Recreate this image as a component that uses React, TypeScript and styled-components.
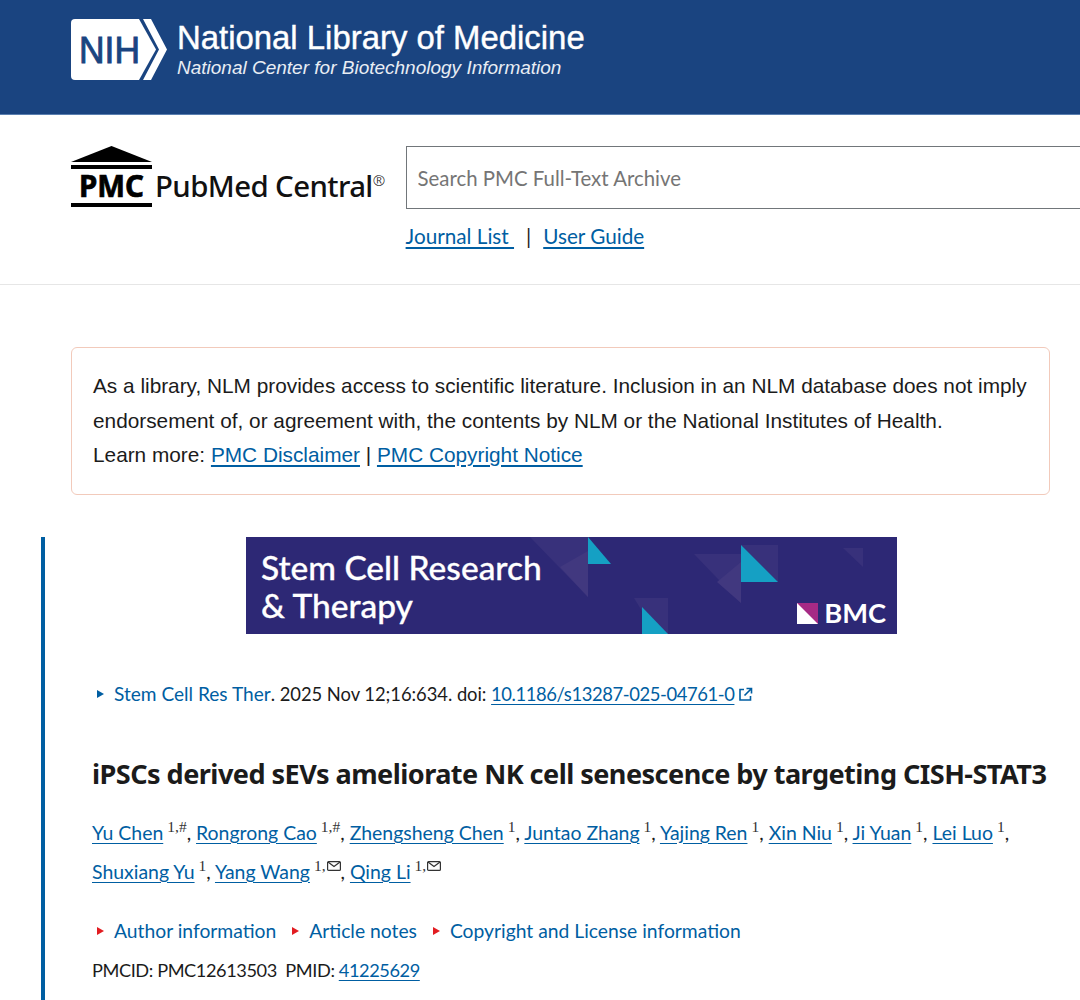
import React from "react";
import styled, { createGlobalStyle } from "styled-components";

const GlobalStyle = createGlobalStyle`
  html, body {
    margin: 0;
    padding: 0;
    background: #fff;
    overflow-x: hidden;
  }
  body {
    font-family: Lato, "Noto Sans", sans-serif;
    color: #1b1b1b;
  }
`;

const sans = `Lato, "Noto Sans", sans-serif`;
const linkBlue = "#005ea2";

const NihBar = styled.header`
  height: 115px;
  background: #1a4480;
  padding: 19px 0 0 71px;
  box-sizing: border-box;
  display: flex;
  gap: 9px;
  border-bottom: 1px solid #5a7fb0;
`;

const NihTitles = styled.div`
  display: flex;
  flex-direction: column;
  color: #fff;
  font-family: "Liberation Sans", Arial, sans-serif;
`;

const NihTitle = styled.div`
  font-size: 32.9px;
  line-height: 38px;
  -webkit-text-stroke: 0.4px #fff;
`;

const NihSubtitle = styled.div`
  font-size: 19px;
  line-height: 22px;
  font-style: italic;
  color: #e8edf4;
`;

const SearchBar = styled.div`
  height: 170px;
  box-sizing: border-box;
  padding: 31px 0 0 71px;
  display: flex;
  gap: 21px;
  border-bottom: 1px solid #e6e6e6;
`;

const PmcLogo = styled.div`
  display: flex;
  align-items: flex-end;
  gap: 3px;
  height: 62px;
  flex-shrink: 0;
`;

const PmcName = styled.div`
  font-family: "Noto Sans", sans-serif;
  font-size: 29.4px;
  font-weight: 500;
  line-height: 30px;
  color: #111;
  letter-spacing: -0.6px;
  padding-bottom: 7px;
  white-space: nowrap;

  sup {
    font-size: 15px;
    font-weight: 300;
    line-height: 0;
    vertical-align: 11px;
  }
`;

const SearchColumn = styled.div`
  flex: 1;
  min-width: 0;
`;

const SearchInput = styled.input`
  display: block;
  width: 100%;
  height: 63px;
  box-sizing: border-box;
  border: 1px solid #71767a;
  border-right: none;
  padding: 0 11px;
  font-family: ${sans};
  font-size: 20.4px;
  outline: none;

  &::placeholder {
    color: #757575;
    opacity: 1;
  }
`;

const SearchLinks = styled.div`
  display: flex;
  align-items: center;
  margin-top: 12px;
  font-size: 20.7px;
  line-height: 30px;
  white-space: pre;
`;

const Divider = styled.span`
  margin: 0 12px;
  color: #1b1b1b;
`;

const Link = styled.a`
  color: ${linkBlue};
  text-decoration: underline;
  text-underline-offset: 3px;
`;

const Main = styled.main`
  padding: 62px 30px 0 71px;
`;

const Notice = styled.div`
  box-sizing: border-box;
  height: 148px;
  border: 1px solid #f2cabb;
  border-radius: 6px;
  padding: 21px 21px 0;
  font-family: "Liberation Sans", Arial, sans-serif;
  font-size: 20.8px;
  line-height: 34.5px;
  color: #1b1b1b;
  white-space: nowrap;
`;

const Article = styled.article`
  margin: 42px 0 0 -30px;
  border-left: 4px solid #005ea2;
  padding-left: 47px;
  height: 463px;
  box-sizing: border-box;
`;

const Banner = styled.div`
  position: relative;
  width: 651px;
  height: 97px;
  margin-left: 154px;
  background: #2d2875;
  overflow: hidden;
  box-sizing: border-box;
  padding: 11px 0 0 15px;
`;

const BannerArt = styled.svg`
  position: absolute;
  inset: 0;
`;

const BannerTitle = styled.div`
  position: relative;
  color: #fff;
  font-family: Lato, sans-serif;
  font-weight: 500;
  font-size: 33.5px;
  line-height: 38px;
  -webkit-text-stroke: 0.3px #fff;
`;

const BmcMark = styled.div`
  position: absolute;
  right: 11px;
  bottom: 8px;
  display: flex;
  align-items: center;
  gap: 6px;
  color: #fff;
  font-family: Lato, sans-serif;
  font-weight: 700;
  font-size: 27.3px;
  line-height: 26px;
`;

const CitationRow = styled.div`
  display: flex;
  align-items: center;
  margin-top: 46px;
  font-size: 19.1px;
  line-height: 28px;
  white-space: pre;
`;

const CitationDetail = styled.span<{ $tight?: boolean }>`
  display: inline-flex;
  font-size: 18.4px;
  letter-spacing: ${(p) => (p.$tight ? "-0.4px" : "-0.05px")};
`;

const Triangle = styled.span<{ $color: string }>`
  display: inline-block;
  width: 0;
  height: 0;
  border-top: 4px solid transparent;
  border-bottom: 4px solid transparent;
  border-left: 7px solid ${(p) => p.$color};
  margin: 0 10px 0 5px;
  flex-shrink: 0;
`;

const PlainLink = styled.a`
  color: ${linkBlue};
`;

const Title = styled.h1`
  margin: 48px 0 0;
  font-family: "Noto Sans", sans-serif;
  font-size: 27.1px;
  line-height: 36px;
  font-weight: 700;
  letter-spacing: -0.55px;
  color: #1b1b1b;
  white-space: nowrap;
`;

const Authors = styled.div`
  margin-top: 21px;
  font-size: 19.45px;
  line-height: 39px;
  white-space: nowrap;
`;

const Sup = styled.sup`
  font-family: "Liberation Serif", serif;
  font-size: 15.5px;
  line-height: 0;
  vertical-align: 8px;
  margin-left: 4px;
  display: inline-flex;
  align-items: center;
  gap: 1px;
  color: #333;
`;

const NotesRow = styled.div`
  display: flex;
  align-items: center;
  gap: 11px;
  margin-top: 25px;
  font-size: 19.3px;
  line-height: 30px;
`;

const NoteItem = styled.span`
  display: inline-flex;
  align-items: center;
  color: ${linkBlue};
`;

const IdRow = styled.div`
  margin-top: 9px;
  font-size: 18.2px;
  letter-spacing: -0.42px;
  line-height: 30px;
`;

const NihLogo = () => (
  <svg width="97" height="62" viewBox="0 0 97 62">
    <path d="M4 0H68L85 30.5L68 61H4Q0 61 0 57V4Q0 0 4 0Z" fill="#fff" />
    <path d="M72 0H80L96 30.5L80 61H72L88 30.5Z" fill="#fff" />
    <text
      x="8"
      y="44"
      fill="#1a4480"
      stroke="#1a4480"
      strokeWidth="0.9"
      fontFamily="'Liberation Sans', Arial, sans-serif"
      fontSize="36"
      textLength="61"
      lengthAdjust="spacingAndGlyphs"
    >
      NIH
    </text>
  </svg>
);

const PmcMark = () => (
  <svg width="81" height="62" viewBox="0 0 81 62">
    <path d="M40.5 0L81 16H0Z" fill="#000" />
    <rect y="19" width="81" height="4" fill="#000" />
    <rect y="57" width="81" height="4" fill="#000" />
    <text
      x="8"
      y="51"
      fill="#000"
      stroke="#000"
      strokeWidth="0.7"
      fontFamily="'Noto Sans', sans-serif"
      fontWeight="700"
      fontSize="29.5"
      textLength="65"
      lengthAdjust="spacingAndGlyphs"
    >
      PMC
    </text>
  </svg>
);

const ExternalIcon = () => (
  <svg width="15" height="15" viewBox="0 0 15 15" style={{ marginLeft: 4 }}>
    <path
      d="M6 2.5H2V13H12.5V9M8.5 1.5H13.5V6.5M13.5 1.5L6.5 8.5"
      fill="none"
      stroke={linkBlue}
      strokeWidth="1.6"
    />
  </svg>
);

const MailIcon = () => (
  <svg width="14" height="10" viewBox="0 0 14 10">
    <rect x="0.6" y="0.6" width="12.8" height="8.8" rx="1" fill="none" stroke="#333" strokeWidth="1.2" />
    <path d="M1 1L7 5.5L13 1" fill="none" stroke="#333" strokeWidth="1.2" />
  </svg>
);

const authorsLineOne: [string, string][] = [
  ["Yu Chen", "1,#"],
  ["Rongrong Cao", "1,#"],
  ["Zhengsheng Chen", "1"],
  ["Juntao Zhang", "1"],
  ["Yajing Ren", "1"],
  ["Xin Niu", "1"],
  ["Ji Yuan", "1"],
  ["Lei Luo", "1"],
];

const App: React.FC = () => (
  <>
    <GlobalStyle />
    <NihBar>
      <NihLogo />
      <NihTitles>
        <NihTitle>National Library of Medicine</NihTitle>
        <NihSubtitle>National Center for Biotechnology Information</NihSubtitle>
      </NihTitles>
    </NihBar>
    <SearchBar>
      <PmcLogo>
        <PmcMark />
        <PmcName>
          PubMed Central<sup>®</sup>
        </PmcName>
      </PmcLogo>
      <SearchColumn>
        <SearchInput placeholder="Search PMC Full-Text Archive" />
        <SearchLinks>
          <Link href="#">Journal List </Link>
          <Divider>|</Divider>
          <Link href="#">User Guide</Link>
        </SearchLinks>
      </SearchColumn>
    </SearchBar>
    <Main>
      <Notice>
        As a library, NLM provides access to scientific literature. Inclusion in an NLM database does not imply
        <br />
        endorsement of, or agreement with, the contents by NLM or the National Institutes of Health.
        <br />
        Learn more: <Link href="#">PMC Disclaimer</Link> | <Link href="#">PMC Copyright Notice</Link>
      </Notice>
      <Article>
        <Banner>
          <BannerArt width="651" height="97" viewBox="0 0 651 97">
            <path d="M284 0H342V60Z" fill="#38317b" />
            <path d="M342 14L314 30L342 60Z" fill="#41387f" />
            <path d="M342 0L365 27H342Z" fill="#15a0c4" />
            <path d="M448 17H495V66Z" fill="#38317b" />
            <path d="M495 25L471 45L495 66Z" fill="#41387f" />
            <path d="M495 8H532V45Z" fill="#38317b" />
            <path d="M495 8L532 45H495Z" fill="#15a0c4" />
            <path d="M597 11H617V30Z" fill="#38317b" />
            <path d="M388 61H422V97H410Z" fill="#38317b" />
            <path d="M396 70L422 97H396Z" fill="#15a0c4" />
          </BannerArt>
          <BannerTitle>
            Stem Cell Research
            <br />
            &amp; Therapy
          </BannerTitle>
          <BmcMark>
            <svg width="21" height="21" viewBox="0 0 21 21">
              <rect width="21" height="21" fill="#a62a85" />
              <path d="M0 0L21 21H0Z" fill="#fff" />
            </svg>
            BMC
          </BmcMark>
        </Banner>
        <CitationRow>
          <Triangle $color={linkBlue} />
          <PlainLink>Stem Cell Res Ther</PlainLink>
          <CitationDetail>. 2025 Nov 12;16:634. doi: </CitationDetail>
          <CitationDetail $tight>
            <Link href="#">10.1186/s13287-025-04761-0</Link>
          </CitationDetail>
          <ExternalIcon />
        </CitationRow>
        <Title>iPSCs derived sEVs ameliorate NK cell senescence by targeting CISH-STAT3</Title>
        <Authors>
          {authorsLineOne.map(([name, mark]) => (
            <React.Fragment key={name}>
              <Link href="#">{name}</Link>
              <Sup>{mark}</Sup>,{" "}
            </React.Fragment>
          ))}
          <br />
          <Link href="#">Shuxiang Yu</Link>
          <Sup>1</Sup>, <Link href="#">Yang Wang</Link>
          <Sup>
            1,
            <MailIcon />
          </Sup>
          , <Link href="#">Qing Li</Link>
          <Sup>
            1,
            <MailIcon />
          </Sup>
        </Authors>
        <NotesRow>
          <NoteItem>
            <Triangle $color="#e21c21" />
            Author information
          </NoteItem>
          <NoteItem>
            <Triangle $color="#e21c21" />
            Article notes
          </NoteItem>
          <NoteItem>
            <Triangle $color="#e21c21" />
            Copyright and License information
          </NoteItem>
        </NotesRow>
        <IdRow>
          PMCID: PMC12613503&nbsp; PMID: <Link href="#">41225629</Link>
        </IdRow>
      </Article>
    </Main>
  </>
);

export default App;
